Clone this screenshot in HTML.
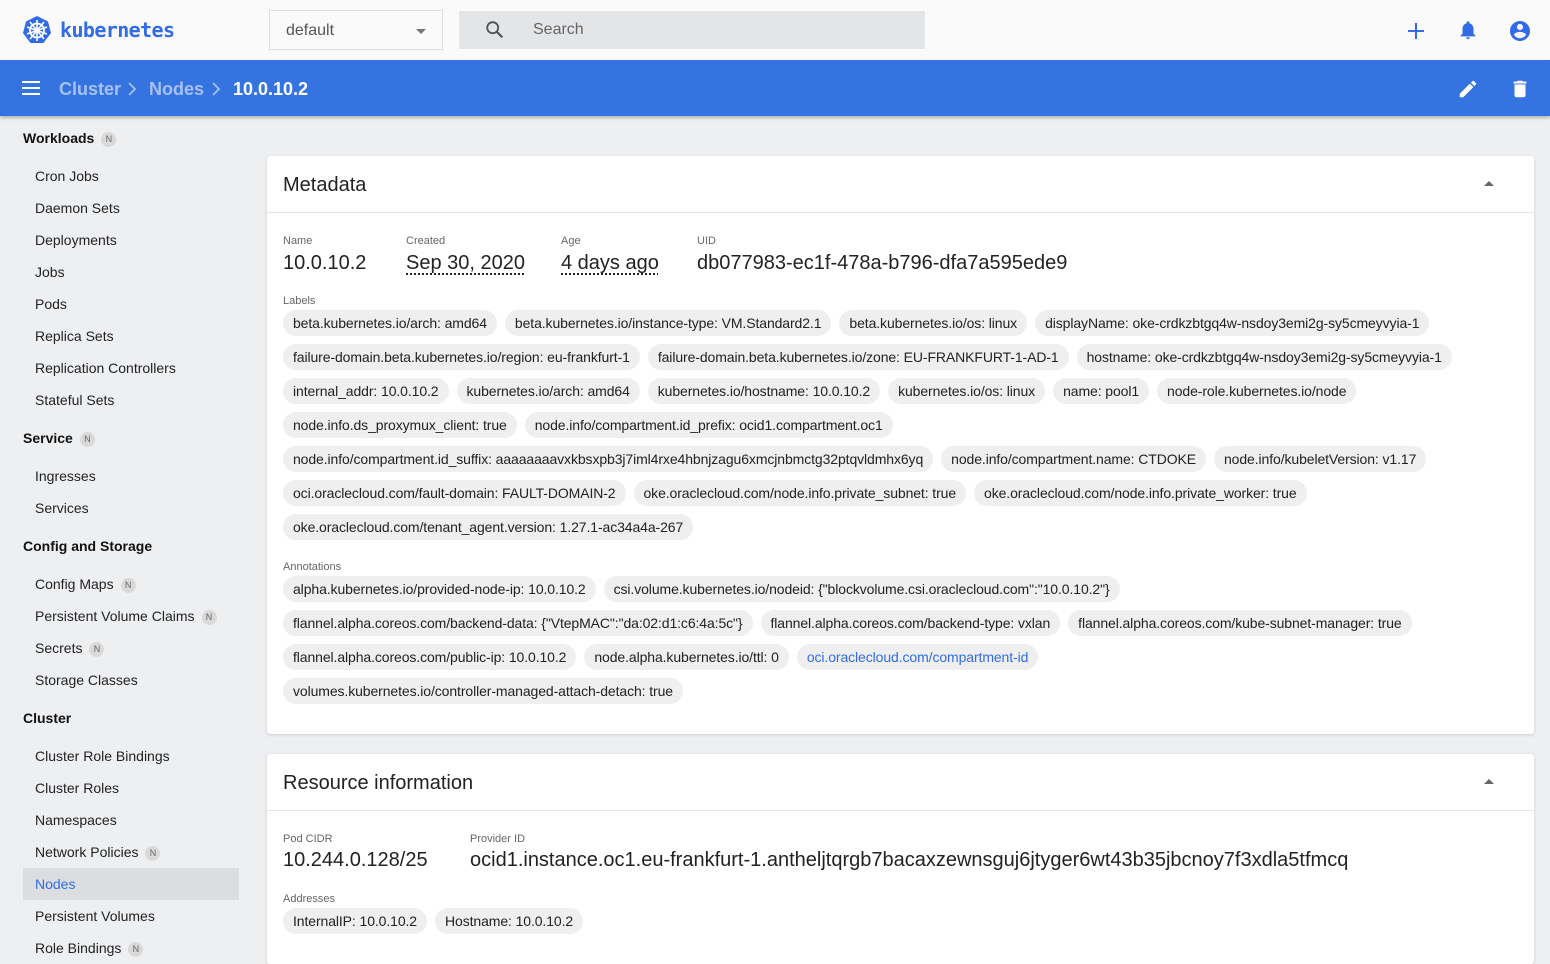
<!DOCTYPE html>
<html><head><meta charset="utf-8"><style>
*{box-sizing:border-box;margin:0;padding:0}
body{width:1550px;height:944px;overflow:hidden;background:#eeeff1;font-family:"Liberation Sans",sans-serif;color:#212121;position:relative}
.top{position:absolute;left:0;top:0;width:1550px;height:60px;background:#fafafa}
.logo{position:absolute;left:22px;top:15px}
.brand{position:absolute;left:60px;top:18px;font-size:20px;font-weight:bold;color:#326ce5;font-family:"DejaVu Sans Mono","Liberation Mono",monospace;letter-spacing:-0.6px}
.ns{position:absolute;left:269px;top:10px;width:174px;height:40px;border:1px solid #ddd;background:#fafafa;font-size:16px;color:#555;padding:11px 16px}
.ns:after{content:"";position:absolute;right:16px;top:18px;border:5px solid transparent;border-top-color:#777}
.search{position:absolute;left:459px;top:11px;width:466px;height:38px;background:#e4e5e7;font-size:16px;color:#666;padding:10px 0 0 74px}
.bar{position:absolute;left:0;top:60px;width:1550px;height:56px;background:#3573e1;box-shadow:0 2px 3px rgba(0,0,0,.25)}
.crumb{position:absolute;top:19px;font-size:18px;font-weight:bold}
.side{position:absolute;left:0;top:116px;width:250px}
.sh{position:absolute;left:23px;font-size:14px;font-weight:bold;color:#111}
.si{position:absolute;left:35px;font-size:14px;color:#222}
.n{display:inline-block;width:15px;height:15px;border-radius:50%;background:#d9d9d9;color:#666;font-size:9px;text-align:center;line-height:15px;margin-left:7px;vertical-align:1px;font-weight:normal}
.card{position:absolute;left:267px;width:1267px;background:#fff;border-radius:3px;box-shadow:0 1px 3px rgba(0,0,0,.15)}
.ct{height:57px;border-bottom:1px solid #e5e5e5;font-size:20px;padding:18px 16px;color:#222;position:relative}
.ct:after{content:"";position:absolute;right:40px;top:25px;border:5px solid transparent;border-bottom-color:#666;border-top:0}
.lab{position:absolute;font-size:11px;color:#666}
.val{position:absolute;font-size:20px;color:#222}
.dot{text-decoration:underline dotted;text-underline-offset:4px}
.row{position:absolute;left:16px;display:flex;gap:8px}
.c{height:26px;border-radius:13px;background:#efefef;font-size:14px;padding:0 10px;line-height:27px;white-space:nowrap;color:#222;letter-spacing:-0.1px}
</style></head><body>
<div class="top">
<svg class="logo" width="30" height="30" viewBox="0 0 30 30"><polygon points="15,1 26,6.5 29,18 21.5,28 8.5,28 1,18 4,6.5" fill="#326ce5"/><circle cx="15" cy="15.5" r="7" fill="none" stroke="#fff" stroke-width="1.8"/><g stroke="#fff" stroke-width="1.6"><line x1="15" y1="5" x2="15" y2="26"/><line x1="5" y1="12" x2="25" y2="19"/><line x1="25" y1="12" x2="5" y2="19"/><line x1="8" y1="24" x2="22" y2="7"/><line x1="22" y1="24" x2="8" y2="7"/></g><circle cx="15" cy="15.5" r="2" fill="#fff"/></svg>
<div class="brand">kubernetes</div>
<div class="ns">default</div>
<div class="search">Search</div>
<svg style="position:absolute;left:484px;top:19px" width="22" height="22" viewBox="0 0 24 24"><circle cx="9.5" cy="9.5" r="6" fill="none" stroke="#555" stroke-width="2"/><line x1="14" y1="14" x2="20" y2="20" stroke="#555" stroke-width="2.4"/></svg>
<svg style="position:absolute;left:1406px;top:21px" width="20" height="20" viewBox="0 0 20 20"><path d="M10 2v16M2 10h16" stroke="#326ce5" stroke-width="2"/></svg>
<svg style="position:absolute;left:1457px;top:19px" width="22" height="22" viewBox="0 0 24 24"><path fill="#326ce5" d="M12 22c1.1 0 2-.9 2-2h-4c0 1.1.9 2 2 2zm6-6v-5c0-3.1-1.6-5.6-4.5-6.3V4c0-.8-.7-1.5-1.5-1.5s-1.5.7-1.5 1.5v.7C7.6 5.4 6 7.9 6 11v5l-2 2v1h16v-1l-2-2z"/></svg>
<svg style="position:absolute;left:1508px;top:19px" width="24" height="24" viewBox="0 0 24 24"><path fill="#326ce5" d="M12 2C6.5 2 2 6.5 2 12s4.5 10 10 10 10-4.5 10-10S17.5 2 12 2zm0 3c1.7 0 3 1.3 3 3s-1.3 3-3 3-3-1.3-3-3 1.3-3 3-3zm0 14.2c-2.5 0-4.7-1.3-6-3.2 0-2 4-3.1 6-3.1s6 1.1 6 3.1c-1.3 1.9-3.5 3.2-6 3.2z"/></svg>
</div>
<div class="bar">
<svg style="position:absolute;left:21px;top:19px" width="20" height="18" viewBox="0 0 20 18"><path d="M1 3h18M1 9h18M1 15h18" stroke="#fff" stroke-width="2"/></svg>
<div class="crumb" style="left:59px;color:#a6c1f2">Cluster</div>
<svg style="position:absolute;left:127px;top:22px" width="10" height="14" viewBox="0 0 10 14"><path d="M2 1l6 6-6 6" fill="none" stroke="#a6c1f2" stroke-width="1.8"/></svg>
<div class="crumb" style="left:149px;color:#a6c1f2">Nodes</div>
<svg style="position:absolute;left:211px;top:22px" width="10" height="14" viewBox="0 0 10 14"><path d="M2 1l6 6-6 6" fill="none" stroke="#a6c1f2" stroke-width="1.8"/></svg>
<div class="crumb" style="left:233px;color:#fff">10.0.10.2</div>
<svg style="position:absolute;left:1457px;top:18px" width="22" height="22" viewBox="0 0 24 24"><path fill="#fff" d="M3 17.2V21h3.8L17.8 9.9l-3.8-3.7L3 17.2zM20.7 7c.4-.4.4-1 0-1.4l-2.3-2.3c-.4-.4-1-.4-1.4 0l-1.8 1.8 3.7 3.8L20.7 7z"/></svg>
<svg style="position:absolute;left:1509px;top:18px" width="22" height="22" viewBox="0 0 24 24"><path fill="#fff" d="M6 19c0 1.1.9 2 2 2h8c1.1 0 2-.9 2-2V7H6v12zM19 4h-3.5l-1-1h-5l-1 1H5v2h14V4z"/></svg>
</div>
<div class="side">
<div class="sh" style="top:14px">Workloads<span class="n">N</span></div>
<div class="si" style="top:52px">Cron Jobs</div>
<div class="si" style="top:84px">Daemon Sets</div>
<div class="si" style="top:116px">Deployments</div>
<div class="si" style="top:148px">Jobs</div>
<div class="si" style="top:180px">Pods</div>
<div class="si" style="top:212px">Replica Sets</div>
<div class="si" style="top:244px">Replication Controllers</div>
<div class="si" style="top:276px">Stateful Sets</div>
<div class="sh" style="top:314px">Service<span class="n">N</span></div>
<div class="si" style="top:352px">Ingresses</div>
<div class="si" style="top:384px">Services</div>
<div class="sh" style="top:422px">Config and Storage</div>
<div class="si" style="top:460px">Config Maps<span class="n">N</span></div>
<div class="si" style="top:492px">Persistent Volume Claims<span class="n">N</span></div>
<div class="si" style="top:524px">Secrets<span class="n">N</span></div>
<div class="si" style="top:556px">Storage Classes</div>
<div class="sh" style="top:594px">Cluster</div>
<div class="si" style="top:632px">Cluster Role Bindings</div>
<div class="si" style="top:664px">Cluster Roles</div>
<div class="si" style="top:696px">Namespaces</div>
<div class="si" style="top:728px">Network Policies<span class="n">N</span></div>
<div style="position:absolute;left:23px;top:752px;width:216px;height:32px;background:#dcdde0"></div>
<div class="si" style="top:760px;color:#326ce5">Nodes</div>
<div class="si" style="top:792px">Persistent Volumes</div>
<div class="si" style="top:824px">Role Bindings<span class="n">N</span></div>
</div>
<div class="card" style="top:156px;height:578px">
<div class="ct">Metadata</div>
<div class="lab" style="left:16px;top:79px">Name</div><div class="val" style="left:16px;top:96px">10.0.10.2</div>
<div class="lab" style="left:139px;top:79px">Created</div><div class="val dot" style="left:139px;top:96px">Sep 30, 2020</div>
<div class="lab" style="left:294px;top:79px">Age</div><div class="val dot" style="left:294px;top:96px">4 days ago</div>
<div class="lab" style="left:430px;top:79px">UID</div><div class="val" style="left:430px;top:96px">db077983-ec1f-478a-b796-dfa7a595ede9</div>
<div class="lab" style="left:16px;top:139px">Labels</div>
<div class="row" style="top:154px"><span class="c">beta.kubernetes.io/arch: amd64</span><span class="c">beta.kubernetes.io/instance-type: VM.Standard2.1</span><span class="c">beta.kubernetes.io/os: linux</span><span class="c">displayName: oke-crdkzbtgq4w-nsdoy3emi2g-sy5cmeyvyia-1</span></div>
<div class="row" style="top:188px"><span class="c">failure-domain.beta.kubernetes.io/region: eu-frankfurt-1</span><span class="c">failure-domain.beta.kubernetes.io/zone: EU-FRANKFURT-1-AD-1</span><span class="c">hostname: oke-crdkzbtgq4w-nsdoy3emi2g-sy5cmeyvyia-1</span></div>
<div class="row" style="top:222px"><span class="c">internal_addr: 10.0.10.2</span><span class="c">kubernetes.io/arch: amd64</span><span class="c">kubernetes.io/hostname: 10.0.10.2</span><span class="c">kubernetes.io/os: linux</span><span class="c">name: pool1</span><span class="c">node-role.kubernetes.io/node</span></div>
<div class="row" style="top:256px"><span class="c">node.info.ds_proxymux_client: true</span><span class="c">node.info/compartment.id_prefix: ocid1.compartment.oc1</span></div>
<div class="row" style="top:290px"><span class="c">node.info/compartment.id_suffix: aaaaaaaavxkbsxpb3j7iml4rxe4hbnjzagu6xmcjnbmctg32ptqvldmhx6yq</span><span class="c">node.info/compartment.name: CTDOKE</span><span class="c">node.info/kubeletVersion: v1.17</span></div>
<div class="row" style="top:324px"><span class="c">oci.oraclecloud.com/fault-domain: FAULT-DOMAIN-2</span><span class="c">oke.oraclecloud.com/node.info.private_subnet: true</span><span class="c">oke.oraclecloud.com/node.info.private_worker: true</span></div>
<div class="row" style="top:358px"><span class="c">oke.oraclecloud.com/tenant_agent.version: 1.27.1-ac34a4a-267</span></div>
<div class="lab" style="left:16px;top:405px">Annotations</div>
<div class="row" style="top:420px"><span class="c">alpha.kubernetes.io/provided-node-ip: 10.0.10.2</span><span class="c">csi.volume.kubernetes.io/nodeid: {"blockvolume.csi.oraclecloud.com":"10.0.10.2"}</span></div>
<div class="row" style="top:454px"><span class="c">flannel.alpha.coreos.com/backend-data: {"VtepMAC":"da:02:d1:c6:4a:5c"}</span><span class="c">flannel.alpha.coreos.com/backend-type: vxlan</span><span class="c">flannel.alpha.coreos.com/kube-subnet-manager: true</span></div>
<div class="row" style="top:488px"><span class="c">flannel.alpha.coreos.com/public-ip: 10.0.10.2</span><span class="c">node.alpha.kubernetes.io/ttl: 0</span><span class="c" style="color:#326ce5">oci.oraclecloud.com/compartment-id</span></div>
<div class="row" style="top:522px"><span class="c">volumes.kubernetes.io/controller-managed-attach-detach: true</span></div>
</div>
<div class="card" style="top:754px;height:210px">
<div class="ct">Resource information</div>
<div class="lab" style="left:16px;top:79px">Pod CIDR</div><div class="val" style="left:16px;top:95px">10.244.0.128/25</div>
<div class="lab" style="left:203px;top:79px">Provider ID</div><div class="val" style="left:203px;top:95px">ocid1.instance.oc1.eu-frankfurt-1.antheljtqrgb7bacaxzewnsguj6jtyger6wt43b35jbcnoy7f3xdla5tfmcq</div>
<div class="lab" style="left:16px;top:139px">Addresses</div>
<div class="row" style="top:154px"><span class="c">InternalIP: 10.0.10.2</span><span class="c">Hostname: 10.0.10.2</span></div>
</div>
</body></html>
